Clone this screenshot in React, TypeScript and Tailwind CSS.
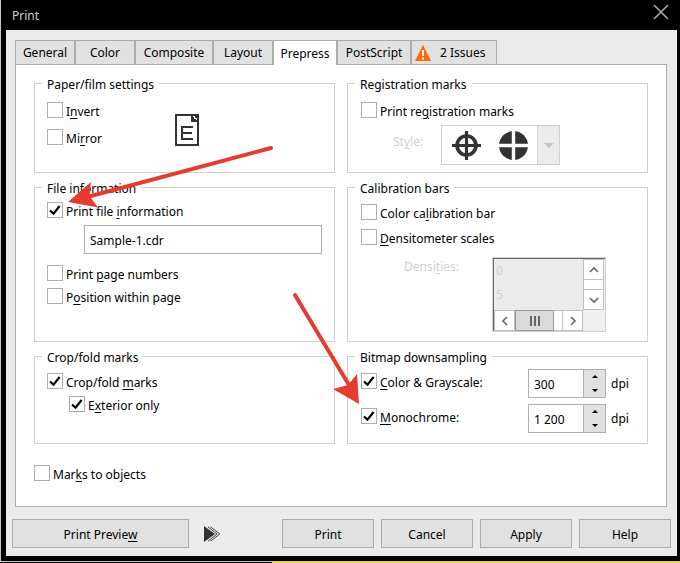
import { useState, type ReactNode } from "react";

const TABS = ["General", "Color", "Composite", "Layout", "Prepress", "PostScript"];
const TAB_WIDTHS = ["w-[60px]", "w-[60px]", "w-[78px]", "w-[60px]", "w-[64px]", "w-[74px]"];

function Group({ title, className, children }: { title: string; className: string; children: ReactNode }) {
  return (
    <fieldset className="min-w-0 border border-[#d0d0d0]">
      <legend className="ml-[7px] h-[15px] px-[5px] pt-px leading-4">{title}</legend>
      <div className={`pr-3 ${className}`}>{children}</div>
    </fieldset>
  );
}

function Check({ on = false, className = "", children }: { on?: boolean; className?: string; children: ReactNode }) {
  return (
    <label className={`flex h-4 items-center gap-[3px] whitespace-nowrap ${className}`}>
      <span className="grid size-4 shrink-0">
        <input
          type="checkbox"
          defaultChecked={on}
          className="peer col-start-1 row-start-1 size-4 appearance-none border border-[#adadad] bg-white"
        />
        <svg
          viewBox="0 0 16 16"
          className="pointer-events-none invisible col-start-1 row-start-1 size-4 fill-none stroke-black peer-checked:visible"
        >
          <path d="M3 8.500 L6.500 11.600 L12.600 4" strokeWidth="2.200" />
        </svg>
      </span>
      <span className="pt-1">{children}</span>
    </label>
  );
}

function Spinner({ label, value }: { label: string; value: string }) {
  return (
    <div className="flex items-center gap-[5px]">
      <div className="flex h-[29px] w-[78px] border border-[#adadad] bg-white">
        <input aria-label={label} defaultValue={value} className="w-[54px] min-w-0 pl-[5px] pt-[2px] outline-none" />
        <div className="flex flex-1 flex-col border-l border-[#adadad] bg-[#e1e1e1]">
          <button aria-label={`Increase ${label}`} className="flex flex-1 items-center justify-center">
            <svg viewBox="0 0 6 3" className="h-[3px] w-[6px]"><path d="M0 3 L3 0 L6 3Z" /></svg>
          </button>
          <button aria-label={`Decrease ${label}`} className="flex flex-1 items-center justify-center">
            <svg viewBox="0 0 6 3" className="h-[3px] w-[6px]"><path d="M0 0 L3 3 L6 0Z" /></svg>
          </button>
        </div>
      </div>
      <span className="w-5">dpi</span>
    </div>
  );
}

function ScrollButton({ label, d }: { label: string; d: string }) {
  return (
    <button disabled aria-label={label} className="flex size-[21px] shrink-0 items-center justify-center border border-[#c0c0c0] bg-white">
      <svg viewBox="0 0 10 10" className="size-[10px] fill-none stroke-[#666]">
        <path d={d} strokeWidth="1.600" />
      </svg>
    </button>
  );
}

function DensityList() {
  return (
    <div className="h-[75px] w-[114px] border border-[#d0d0d0] bg-[#efefef]">
      <div className="flex h-[73px] flex-col border-l border-t border-[#696969] pr-px">
        <div className="flex">
          <ul className="flex h-[51px] flex-1 flex-col gap-2 bg-[#ebebeb] pl-[2px] pt-1 text-[#d0d0d0]">
            <li>0</li>
            <li>5</li>
          </ul>
          <div className="flex h-[51px] flex-col justify-between border-x border-[#c0c0c0] bg-white">
            <div className="-mx-px"><ScrollButton label="Scroll up" d="M1 7 L5 3 L9 7" /></div>
            <div className="-mx-px"><ScrollButton label="Scroll down" d="M1 3 L5 7 L9 3" /></div>
          </div>
        </div>
        <div className="flex h-[21px] w-[89px] bg-white">
          <ScrollButton label="Scroll left" d="M7 1 L3 5 L7 9" />
          <div className="flex w-[39px] items-center justify-center gap-[2px] border border-[#999] bg-[#dadada]">
            <span className="h-[10px] w-[2px] bg-[#666]" />
            <span className="h-[10px] w-[2px] bg-[#666]" />
            <span className="h-[10px] w-[2px] bg-[#666]" />
          </div>
          <div className="flex-1 border-y border-[#c0c0c0]" />
          <ScrollButton label="Scroll right" d="M3 1 L7 5 L3 9" />
        </div>
      </div>
    </div>
  );
}

function StylePicker() {
  return (
    <button disabled aria-label="Style" aria-haspopup="listbox" className="flex h-10 w-[119px] border border-[#d0d0d0] bg-white">
      <span className="flex h-full flex-1 items-center justify-center gap-[18px]">
        <svg viewBox="0 0 29 29" className="size-[29px] fill-none stroke-[#333]">
          <circle cx="14.500" cy="14.500" r="9.500" strokeWidth="3.600" />
          <path d="M14.500 0 V29 M0 14.500 H29" strokeWidth="3.200" />
        </svg>
        <svg viewBox="0 0 29 29" className="size-[29px] fill-[#333]">
          <circle cx="14.500" cy="14.500" r="14.500" />
          <path d="M14.500 0 V29 M0 14.500 H29" className="stroke-white" strokeWidth="3.400" />
        </svg>
      </span>
      <span className="flex h-full w-[22px] items-center justify-center border-l border-[#d0d0d0] bg-[#ebebeb]">
        <svg viewBox="0 0 10 5" className="h-[5px] w-[10px] fill-[#c4c4c4]"><path d="M0 0 H10 L5 5Z" /></svg>
      </span>
    </button>
  );
}

function PushButton({ className = "w-[92px]", children }: { className?: string; children: ReactNode }) {
  return (
    <button className={`h-[29px] border border-[#adadad] bg-[#e1e1e1] pt-[2px] hover:bg-[#e5f1fb] ${className}`}>
      {children}
    </button>
  );
}

// Red callouts pointing at the options to tick
function Callouts() {
  return (
    <svg width="680" height="563" viewBox="0 0 680 563" className="pointer-events-none absolute left-0 top-0 fill-[#e63c30] stroke-[#e63c30]">
      <path d="M271 148 L88 196.700" strokeWidth="4" strokeLinecap="round" />
      <path d="M68 202 L91 182 L89.500 196 L98 207.500Z" stroke="none" />
      <path d="M295 295 L349 385" strokeWidth="4" strokeLinecap="round" />
      <path d="M359 404 L357 374 L348 385 L333 389Z" stroke="none" />
    </svg>
  );
}

export default function App() {
  const [tab, setTab] = useState("Prepress");

  return (
    <div className="relative bg-black font-['Noto_Sans',sans-serif] text-[12px] leading-4 text-black [&_u]:underline-offset-2">
      <div className="border-b border-l border-[#c8c8c8] pb-[5px] pl-[5px] pr-[3px]">
        <header className="flex h-[30px] items-start justify-between pl-[6px] pr-2">
          <h1 className="pt-2 text-[#d0d0d0]">Print</h1>
          <button aria-label="Close" className="pt-1">
            <svg viewBox="0 0 16 16" className="size-4 fill-none stroke-[#a8a8a8]">
              <path d="M1 1 L15 15 M15 1 L1 15" strokeWidth="1.600" />
            </svg>
          </button>
        </header>

        <main className="bg-[#ebebeb] pb-2 pt-[10px]">
          <div role="tablist" className="flex px-[9px]">
            {TABS.map((name, i) => (
              <button
                key={name}
                role="tab"
                aria-selected={tab === name}
                onClick={() => setTab(name)}
                className={`h-6 border-x border-t border-[#adadad] ${TAB_WIDTHS[i]} ${
                  tab === name ? "relative -mb-px h-[25px] bg-white pt-[2px]" : "bg-[#e1e1e1]"
                }`}
              >
                {name}
              </button>
            ))}
            <button role="tab" aria-selected={false} className="flex h-6 w-[86px] items-center gap-[9px] border-x border-t border-[#adadad] bg-[#e1e1e1] pl-[3px]">
              <svg viewBox="0 0 16 16" className="size-4">
                <path d="M8 0 L16 16 H0Z" fill="#ff6a00" />
                <path d="M8 5 V11 M8 12.500 V14.500" stroke="#fff" strokeWidth="2" />
              </svg>
              2 Issues
            </button>
          </div>

          <section className="ml-[9px] mr-[10px] border border-[#adadad] bg-white px-[18px] pb-[25px] pt-[11px]">
            <div className="grid grid-cols-2 gap-x-3 gap-y-[7px]">
              <Group title="Paper/film settings" className="min-h-[81px] pl-3 pt-[11px]">
                <div className="flex">
                  <div className="flex w-32 flex-col gap-[11px]">
                    <Check>I<u>n</u>vert</Check>
                    <Check>Mi<u>r</u>ror</Check>
                  </div>
                  <svg viewBox="0 0 24 32" className="mt-3 h-8 w-6 fill-none stroke-[#333]">
                    <path d="M1 1 H23 V31 H1Z" strokeWidth="2" />
                    <path d="M16 1 H23 V8 H16Z" fill="#333" stroke="none" />
                    <path d="M18 2 H20 V4 H22 V6 H21 V5 H19 V3 H18Z" fill="#fff" stroke="none" />
                    <path d="M18 13 H7 V25 H18 M7 19 H17" strokeWidth="2" />
                  </svg>
                </div>
              </Group>

              <Group title="Registration marks" className="pl-[13px] pt-[11px]">
                <Check>Print re<u>g</u>istration marks</Check>
                <div className="mt-[7px] flex pl-8">
                  <span className="w-12 pt-[9px] text-[#d0d0d0]">St<u>y</u>le:</span>
                  <StylePicker />
                </div>
              </Group>

              <Group title="File information" className="min-h-[146px] pl-3 pt-[7px]">
                <Check on>Print file <u>i</u>nformation</Check>
                <input
                  aria-label="File information text"
                  defaultValue="Sample-1.cdr"
                  className="ml-[37px] mt-[7px] block h-[29px] w-[238px] border border-[#adadad] pl-[5px] pt-[2px] outline-none"
                />
                <Check className="mt-[11px]">Print <u>p</u>age numbers</Check>
                <Check className="mt-[7px]">P<u>o</u>sition within page</Check>
              </Group>

              <Group title="Calibration bars" className="pl-[13px] pt-[9px]">
                <Check>Color ca<u>l</u>ibration bar</Check>
                <Check className="mt-[9px]"><u>D</u>ensitometer scales</Check>
                <div className="mt-3 flex justify-between pl-[43px] pr-[29px]">
                  <span className="pt-[2px] text-[#d0d0d0]">Densi<u>t</u>ies:</span>
                  <DensityList />
                </div>
              </Group>

              <Group title="Crop/fold marks" className="min-h-[79px] pl-3 pt-[9px]">
                <Check on>Crop/fold <u>m</u>arks</Check>
                <Check on className="ml-[22px] mt-[7px]">E<u>x</u>terior only</Check>
              </Group>

              <Group title="Bitmap downsampling" className="pl-[13px] pt-[5px]">
                <div className="flex items-start justify-between pr-1">
                  <Check on className="mt-1"><u>C</u>olor &amp; Grayscale:</Check>
                  <Spinner label="Color and grayscale resolution" value="300" />
                </div>
                <div className="mt-[6px] flex items-start justify-between pr-1">
                  <Check on className="mt-1"><u>M</u>onochrome:</Check>
                  <Spinner label="Monochrome resolution" value="1 200" />
                </div>
              </Group>
            </div>
            <Check className="mt-[21px]">Mar<u>k</u>s to objects</Check>
          </section>

          <footer className="mt-3 flex items-center justify-between pl-[6px] pr-[6px]">
            <div className="flex items-center gap-[15px]">
              <PushButton className="w-[177px]">Print Previe<u>w</u></PushButton>
              <button aria-label="Expand preview">
                <svg viewBox="0 0 17 16" className="block h-4 w-[17px]">
                  <path d="M0 0 L11 8 L0 16Z" fill="#333" />
                  <path d="M4 0.800 L13 8 L4 15.200 M6.500 0.800 L15.800 8 L6.500 15.200" fill="none" stroke="#444" />
                </svg>
              </button>
            </div>
            <div className="flex gap-[7px]">
              <PushButton>Print</PushButton>
              <PushButton>Cancel</PushButton>
              <PushButton>Apply</PushButton>
              <PushButton>Help</PushButton>
            </div>
          </footer>
        </main>
      </div>
      <div className="flex h-px">
        <div className="w-2/5 bg-black" />
        <div className="flex-1 bg-[#ffe000]" />
      </div>
      <Callouts />
    </div>
  );
}
